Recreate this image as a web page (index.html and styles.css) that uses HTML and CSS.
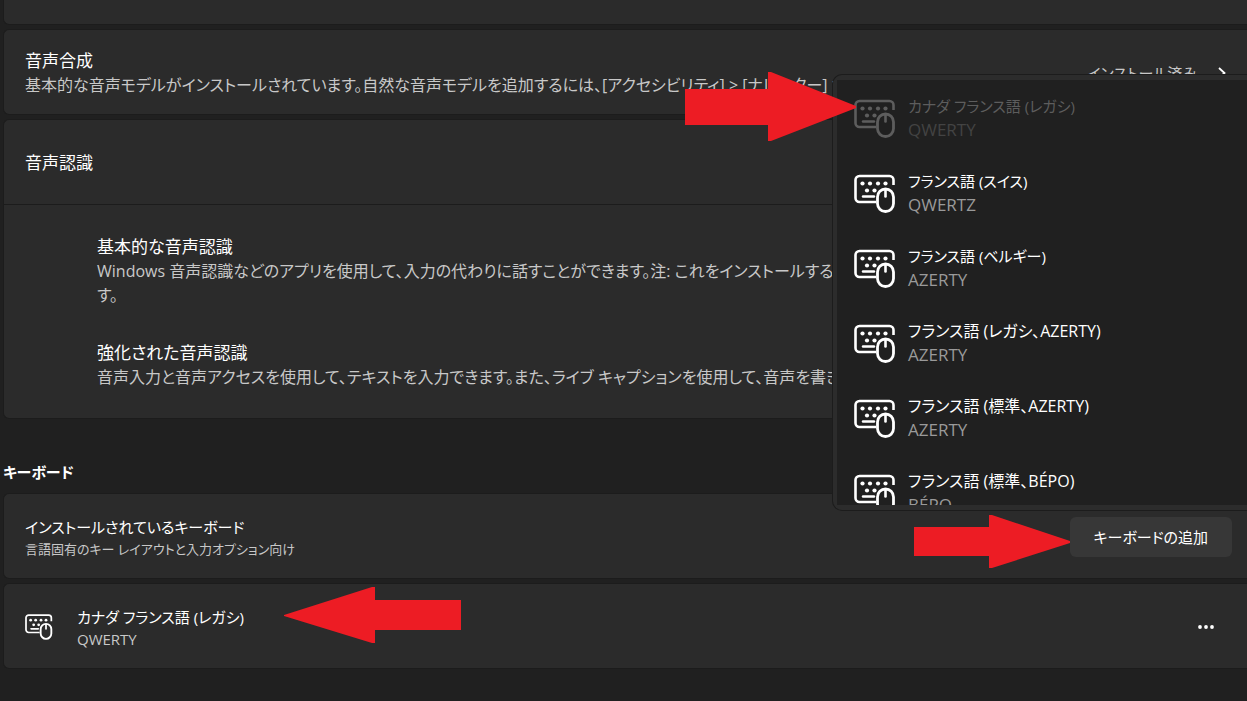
FILE: index.html
```html
<!DOCTYPE html>
<html lang="ja">
<head>
  <meta charset="UTF-8">
  <meta name="viewport" content="width=device-width, initial-scale=1.0">
  <title>言語オプション</title>
  <link rel="stylesheet" href="styles.css">
</head>
<body>

<!-- Shared icons -->
<svg class="sprite" aria-hidden="true">
  <symbol id="icon-keyboard" viewBox="0 0 42 40">
    <path d="M22 29H5.500a4 4 0 0 1-4-4V7a4 4 0 0 1 4-4H35.500a4 4 0 0 1 4 4V12" fill="none" stroke="currentColor" stroke-width="2.600"/>
    <path d="M9 23.500H20" fill="none" stroke="currentColor" stroke-width="2.400" stroke-linecap="round"/>
    <g fill="currentColor">
      <circle cx="8.500" cy="10.500" r="2.100"/>
      <circle cx="16" cy="10.500" r="2.100"/>
      <circle cx="24" cy="10.500" r="2.100"/>
      <circle cx="31.500" cy="10.500" r="2.100"/>
      <circle cx="13" cy="17.500" r="2.100"/>
      <circle cx="20.500" cy="17.500" r="2.100"/>
    </g>
    <rect x="23.500" y="16" width="16" height="22.500" rx="8" fill="none" stroke="currentColor" stroke-width="2.800"/>
    <path d="M31.500 17V23.500" fill="none" stroke="currentColor" stroke-width="2.600" stroke-linecap="round"/>
  </symbol>
</svg>

<main class="page">
  <section class="card-list">
    <div class="card card-stub"></div>

    <div class="card row">
      <div class="row-text">
        <h3>音声合成</h3>
        <p>基本的な音声モデルがインストールされています。自然な音声モデルを追加するには、[アクセシビリティ] &gt; [ナレーター] &gt; [ナ</p>
      </div>
      <div class="row-status">
        <span>インストール済み</span>
        <svg class="chevron" viewBox="0 0 10 14"><path d="M2 2l5.500 5L2 12" fill="none" stroke="currentColor" stroke-width="1.800"/></svg>
      </div>
    </div>

    <div class="card">
      <div class="row row-head">
        <h3>音声認識</h3>
      </div>
      <div class="details">
        <div>
          <h3>基本的な音声認識</h3>
          <p>Windows 音声認識などのアプリを使用して、入力の代わりに話すことができます。注: これをインストールすると<br>す。</p>
        </div>
        <div>
          <h3>強化された音声認識</h3>
          <p>音声入力と音声アクセスを使用して、テキストを入力できます。また、ライブ キャプションを使用して、音声を書き</p>
        </div>
      </div>
    </div>
  </section>

  <h2>キーボード</h2>

  <section class="card-list">
    <div class="card row keyboards">
      <div class="row-text">
        <h3 class="label">インストールされているキーボード</h3>
        <p class="small">言語固有のキー レイアウトと入力オプション向け</p>
      </div>
      <button class="add-btn" type="button">キーボードの追加</button>

      <!-- Add keyboard menu -->
      <div class="flyout">
        <ul class="flyout-list">
          <li><button class="item" type="button" disabled>
            <svg class="item-icon"><use href="#icon-keyboard"/></svg>
            <span class="item-text"><span class="label">カナダ フランス語 (レガシ)</span><span class="layout">QWERTY</span></span>
          </button></li>
          <li><button class="item" type="button">
            <svg class="item-icon"><use href="#icon-keyboard"/></svg>
            <span class="item-text"><span class="label">フランス語 (スイス)</span><span class="layout">QWERTZ</span></span>
          </button></li>
          <li><button class="item" type="button">
            <svg class="item-icon"><use href="#icon-keyboard"/></svg>
            <span class="item-text"><span class="label">フランス語 (ベルギー)</span><span class="layout">AZERTY</span></span>
          </button></li>
          <li><button class="item" type="button">
            <svg class="item-icon"><use href="#icon-keyboard"/></svg>
            <span class="item-text"><span class="name">フランス語 (レガシ、AZERTY)</span><span class="layout">AZERTY</span></span>
          </button></li>
          <li><button class="item" type="button">
            <svg class="item-icon"><use href="#icon-keyboard"/></svg>
            <span class="item-text"><span class="name">フランス語 (標準、AZERTY)</span><span class="layout">AZERTY</span></span>
          </button></li>
          <li><button class="item" type="button">
            <svg class="item-icon"><use href="#icon-keyboard"/></svg>
            <span class="item-text"><span class="name">フランス語 (標準、BÉPO)</span><span class="layout">BÉPO</span></span>
          </button></li>
        </ul>
      </div>
    </div>

    <div class="card row">
      <svg class="row-icon"><use href="#icon-keyboard"/></svg>
      <div class="row-text">
        <h3 class="label">カナダ フランス語 (レガシ)</h3>
        <p class="layout-small">QWERTY</p>
      </div>
      <button class="more-btn" type="button" aria-label="その他のオプション">
        <svg viewBox="0 0 18 6"><circle cx="3" cy="3" r="1.900"/><circle cx="9" cy="3" r="1.900"/><circle cx="15" cy="3" r="1.900"/></svg>
      </button>
    </div>
  </section>

  <!-- Arrows -->
  <svg class="arrow arrow-item" viewBox="0 0 171 69"><path d="M0 17H83V0h3L171 34v2L86 69h-3V53H0z"/></svg>
  <svg class="arrow arrow-add" viewBox="0 0 156 53"><path d="M0 12H75V0h3L156 26v2L78 53h-3V41H0z"/></svg>
  <svg class="arrow arrow-installed" viewBox="0 0 177 56"><path d="M177 13H91V0h-3L0 28v1L88 56h3V43H177z"/></svg>
</main>

</body>
</html>
```

FILE: styles.css
```css
* {
  box-sizing: border-box;
}

body {
  margin: 0;
  background-color: #202020;
  color: #fff;
  font-family: "Open Sans", "Noto Sans CJK JP", sans-serif;
  font-size: 16px;
  line-height: 24px;
  font-feature-settings: "palt";
}

h2, h3, p, ul {
  margin: 0;
  padding: 0;
}

h2 {
  font-size: 15px;
  font-weight: 700;
  padding: 41px 0 9px;
}

h3 {
  font-size: 17px;
  font-weight: 400;
}

p {
  color: #c8c8c8;
}

button {
  font: inherit;
  font-feature-settings: inherit;
  color: inherit;
  border: none;
  background: none;
  padding: 0;
}

.sprite {
  position: absolute;
  width: 0;
  height: 0;
}

.page {
  position: relative;
  min-height: 100vh;
  padding-left: 3px;
  overflow: hidden;
}

/* Cards */
.card-list {
  display: flex;
  flex-direction: column;
  gap: 4px;
}

.card {
  background-color: #2b2b2b;
  border: 1px solid #1c1c1c;
  border-right: none;
  border-radius: 6px 0 0 6px;
}

.card-stub {
  height: 25px;
  border-top: none;
  border-top-left-radius: 0;
}

.row {
  display: flex;
  align-items: center;
  min-height: 86px;
  padding: 1px 15px 0 21px;
}

.row-head {
  min-height: 85px;
  border-bottom: 1px solid #1c1c1c;
}

.row-text {
  flex: 1;
  min-width: 0;
  white-space: nowrap;
}

.label {
  font-size: 15px;
}

.small {
  font-size: 13px;
  line-height: 20px;
}

.layout-small {
  font-size: 15px;
  line-height: 20px;
}

.row-status {
  display: flex;
  align-items: center;
  gap: 20px;
  padding-right: 5px;
  color: #c8c8c8;
  font-size: 15px;
  white-space: nowrap;
}

.chevron {
  width: 10px;
  height: 14px;
  color: #fff;
}

.row-icon {
  width: 28px;
  height: 27px;
  margin-right: 24px;
}

.details {
  display: flex;
  flex-direction: column;
  gap: 34px;
  padding: 30px 0 29px 93px;
  white-space: nowrap;
}

/* Buttons */
.add-btn {
  padding: 8px 24px;
  background-color: #373737;
  border-radius: 6px;
  font-size: 15px;
}

.more-btn {
  display: flex;
  padding: 12px 17px;
}

.more-btn svg {
  width: 18px;
  height: 6px;
  fill: #fff;
}

/* Flyout */
.keyboards {
  position: relative;
}

.flyout {
  position: absolute;
  right: 0;
  bottom: 67px;
  width: 415px;
  padding: 5px 0 5px 4px;
  background-color: #2c2c2c;
  border: 1px solid #1c1c1c;
  border-right: none;
  border-radius: 10px 0 0 10px;
}

.flyout-list {
  height: 425px;
  overflow: hidden;
  list-style: none;
  background-color: #202020;
}

.item {
  display: flex;
  align-items: center;
  gap: 12px;
  width: 100%;
  height: 75px;
  padding: 0 17px;
  text-align: left;
}

.item-icon {
  width: 42px;
  height: 40px;
}

.item-text {
  display: flex;
  flex-direction: column;
}

.layout {
  color: #9a9a9a;
  font-size: 17px;
}

.item:disabled {
  color: #5d5d5d;
}

.item:disabled .layout {
  color: #434343;
}

/* Arrows lie over the page */
.arrow {
  position: absolute;
  fill: #ed1c24;
}

.arrow-item {
  top: 72px;
  left: 685px;
  width: 171px;
  height: 69px;
}

.arrow-add {
  top: 515px;
  left: 914px;
  width: 156px;
  height: 53px;
}

.arrow-installed {
  top: 587px;
  left: 284px;
  width: 177px;
  height: 56px;
}
```
